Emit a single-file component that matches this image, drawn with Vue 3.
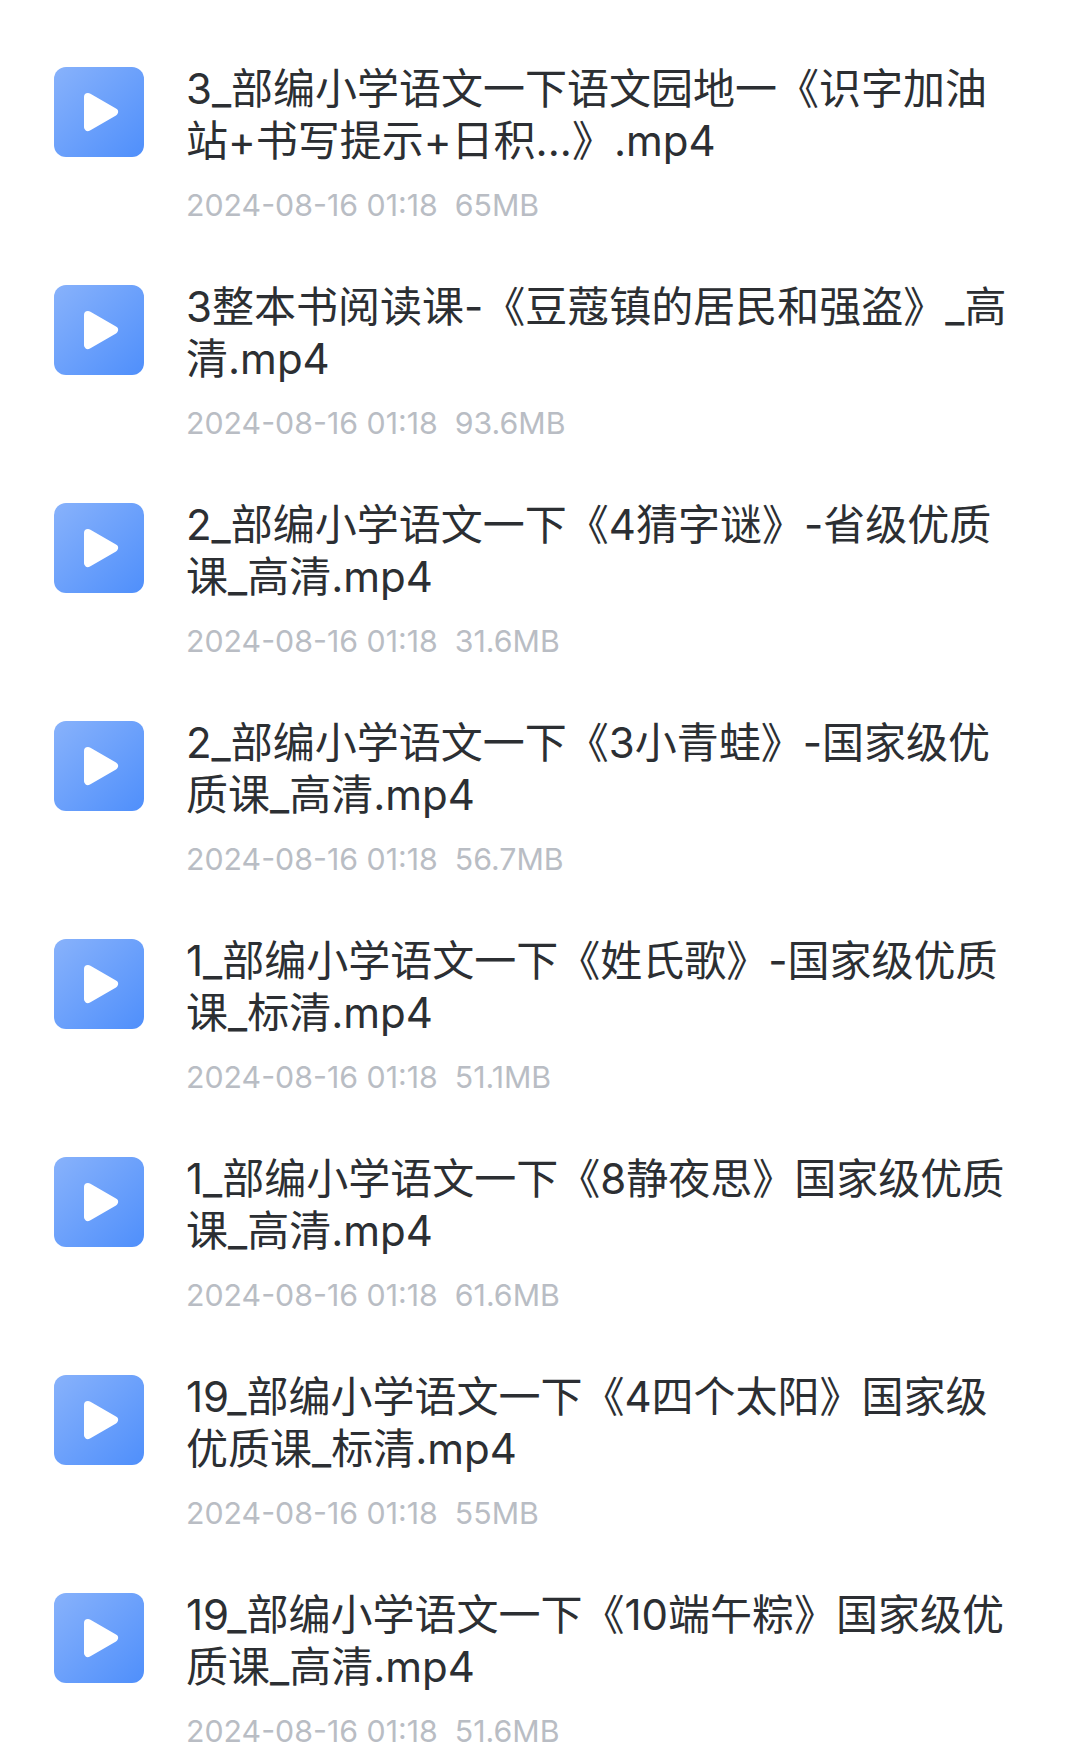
<script setup>
const files = [
  { lines: ['3_部编小学语文一下语文园地一《识字加油', '站+书写提示+日积...》.mp4'], size: '65MB' },
  { lines: ['3整本书阅读课-《豆蔻镇的居民和强盗》_高', '清.mp4'], size: '93.6MB' },
  { lines: ['2_部编小学语文一下《4猜字谜》-省级优质', '课_高清.mp4'], size: '31.6MB' },
  { lines: ['2_部编小学语文一下《3小青蛙》-国家级优', '质课_高清.mp4'], size: '56.7MB' },
  { lines: ['1_部编小学语文一下《姓氏歌》-国家级优质', '课_标清.mp4'], size: '51.1MB' },
  { lines: ['1_部编小学语文一下《8静夜思》国家级优质', '课_高清.mp4'], size: '61.6MB' },
  { lines: ['19_部编小学语文一下《4四个太阳》国家级', '优质课_标清.mp4'], size: '55MB' },
  { lines: ['19_部编小学语文一下《10端午粽》国家级优', '质课_高清.mp4'], size: '51.6MB' }
];
</script>

<template>
  <div class="list">
    <div v-for="file in files" :key="file.lines[0]" class="row">
      <div class="thumb">
        <svg viewBox="0 0 90 90" width="90" height="90" aria-hidden="true">
          <defs>
            <linearGradient id="thumbGrad" x1="0" y1="0" x2="1" y2="1">
              <stop offset="0" stop-color="#88b2fb" />
              <stop offset="1" stop-color="#4f8ffb" />
            </linearGradient>
          </defs>
          <rect width="90" height="90" rx="12" fill="url(#thumbGrad)" />
          <path d="M34 30 L60 45 L34 60 Z" fill="#fff" stroke="#fff" stroke-width="8" stroke-linejoin="round" />
        </svg>
      </div>
      <div class="info">
        <div class="title">
          <div v-for="line in file.lines" :key="line" class="line">{{ line }}</div>
        </div>
        <div class="meta">2024-08-16 01:18&nbsp;&nbsp;{{ file.size }}</div>
      </div>
    </div>
  </div>
</template>

<style scoped>
.list {
  width: 1077px;
  height: 1759px;
  overflow: hidden;
  padding-top: 67px;
  box-sizing: border-box;
  background: #fff;
  font-family: "Inter", "Noto Sans CJK SC", sans-serif;
}

.row {
  display: flex;
  gap: 42px;
  height: 218px;
  padding-left: 54px;
}

.thumb {
  width: 90px;
  height: 90px;
  flex-shrink: 0;
}

.thumb svg {
  display: block;
}

.info {
  margin-top: -4px;
}

.title {
  font-size: 42px;
  line-height: 52px;
  color: #2c2f33;
}

.line {
  white-space: nowrap;
}

.meta {
  margin-top: 18px;
  font-size: 30.3px;
  line-height: 40px;
  color: #b9bdc4;
}
</style>
